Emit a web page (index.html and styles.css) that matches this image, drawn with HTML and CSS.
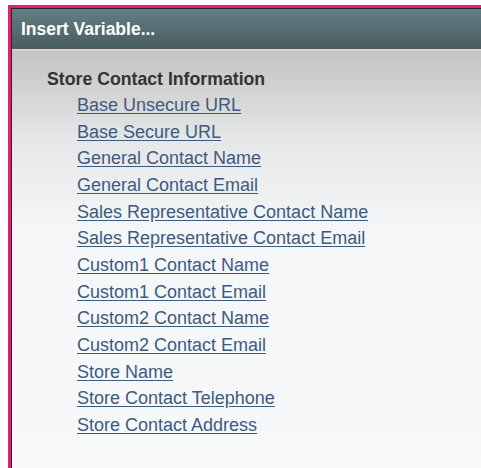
FILE: index.html
```html
<!DOCTYPE html>
<html lang="en">
<head>
<meta charset="utf-8">
<title>Insert Variable...</title>
<link rel="stylesheet" href="styles.css">
</head>
<body>
<div class="frame">
  <div class="dialog">
    <div class="dialog-header">Insert Variable...</div>
    <div class="dialog-body">
      <div class="group-title">Store Contact Information</div>
      <ul class="var-list">
        <li><a href="#">Base Unsecure URL</a></li>
        <li><a href="#">Base Secure URL</a></li>
        <li><a href="#">General Contact Name</a></li>
        <li><a href="#">General Contact Email</a></li>
        <li><a href="#">Sales Representative Contact Name</a></li>
        <li><a href="#">Sales Representative Contact Email</a></li>
        <li><a href="#">Custom1 Contact Name</a></li>
        <li><a href="#">Custom1 Contact Email</a></li>
        <li><a href="#">Custom2 Contact Name</a></li>
        <li><a href="#">Custom2 Contact Email</a></li>
        <li><a href="#">Store Name</a></li>
        <li><a href="#">Store Contact Telephone</a></li>
        <li><a href="#">Store Contact Address</a></li>
      </ul>
    </div>
  </div>
</div>
</body>
</html>
```

FILE: styles.css
```css
html, body {
  margin: 0;
  padding: 0;
  height: 100%;
  background: #ffffff;
  font-family: "Liberation Sans", Arial, sans-serif;
}

.frame {
  box-sizing: border-box;
  height: calc(100% - 5px);
  margin: 5px 0 0 8px;
  border-top: 3px solid #ee1b6d;
  border-left: 3px solid #ee1b6d;
  overflow: hidden;
}

.dialog {
  box-sizing: border-box;
  height: 100%;
  border-top: 1px solid #1e2629;
  border-left: 1px solid #1e2629;
  display: flex;
  flex-direction: column;
}

.dialog-header {
  height: 40px;
  line-height: 40px;
  padding-left: 9px;
  background: linear-gradient(#627e83, #4a5c60);
  color: #ffffff;
  font-weight: bold;
  font-size: 17.5px;
  border-bottom: 2px solid #d3d5d5;
}

.dialog-body {
  flex: 1;
  padding-top: 15px;
  background: linear-gradient(#c3c3c3 0px, #e6e7e8 90px, #f5f6f8 180px, #f7f8f9 100%);
}

.group-title {
  padding-left: 35px;
  line-height: 26px;
  font-size: 17.7px;
  font-weight: bold;
  color: #333333;
}

.var-list {
  list-style: none;
  margin: 0;
  padding: 0 0 0 65px;
}

.var-list li {
  line-height: 26.67px;
  font-size: 18px;
}

.var-list a {
  color: #3c5b80;
  text-decoration: underline;
  text-underline-offset: 2px;
}
```
